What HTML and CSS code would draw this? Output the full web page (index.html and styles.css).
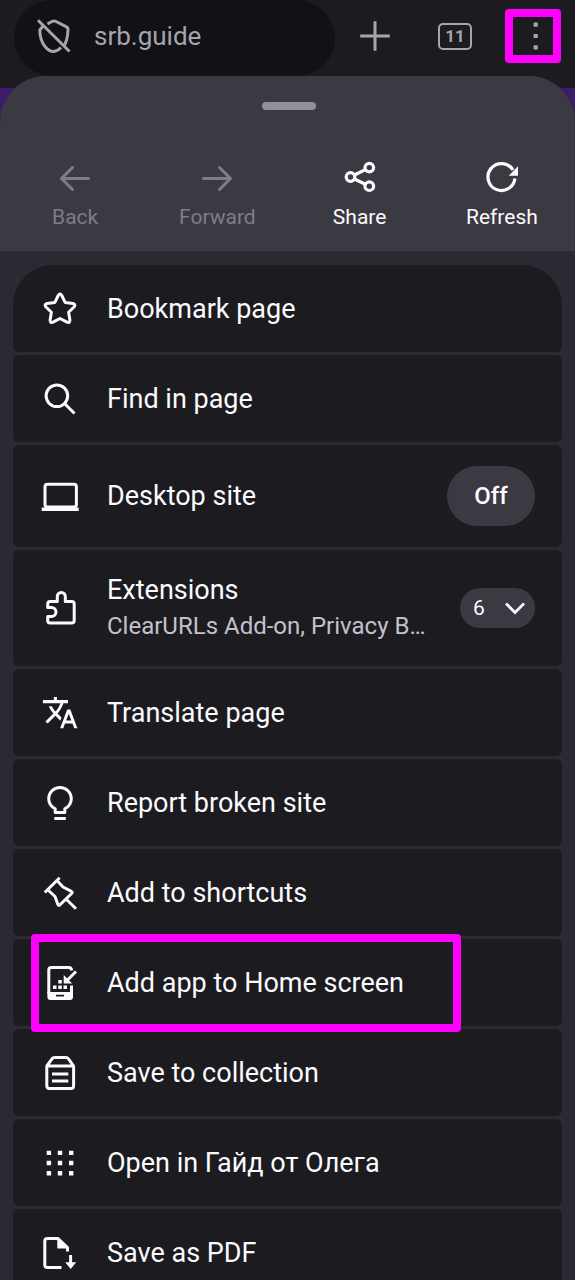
FILE: index.html
```html
<!DOCTYPE html>
<html lang="en">
<head>
<meta charset="utf-8">
<meta name="viewport" content="width=device-width, initial-scale=1">
<title>Browser menu</title>
<link rel="stylesheet" href="styles.css">
</head>
<body>
<div class="screen">
  <header class="toolbar">
    <button class="address" type="button">
      <svg class="icon" viewBox="0 0 40 40"><path d="M13.500 7.800 18 5.500Q20 4.500 22 5.500L32.500 10.800Q34.200 11.700 34 14Q33.500 25 29.500 31M5.800 13Q5.600 24 11 30.500Q15 35.500 19.500 35.500Q24 35 27 31.500M4 4.200 35.500 35.500M5.800 14 9.500 9.500"/></svg>
      <span>srb.guide</span>
    </button>
    <div class="actions">
      <button class="action" type="button" aria-label="New tab">
        <svg class="icon" viewBox="0 0 40 40"><path d="M20 5.200V34.800M5.200 20H34.800"/></svg>
      </button>
      <button class="action" type="button" aria-label="Open tabs"><span class="tab-count">11</span></button>
      <button class="action action-marked" type="button" aria-label="Menu">
        <svg class="icon solid" viewBox="0 0 40 40"><path d="M20.600 6.600h4.200v4.200h-4.200zM20.600 17.900h4.200v4.200h-4.200zM20.600 29.200h4.200v4.200h-4.200z"/></svg>
      </button>
    </div>
  </header>

  <main class="sheet">
    <div class="sheet-head">
      <div class="handle"></div>
      <nav class="page-nav">
        <button class="nav-button" type="button" disabled>
          <svg class="icon round" viewBox="0 0 40 40"><path d="M33.500 21.500H6.500M17.500 10.500 6.500 21.500 17.500 32.500"/></svg>
          <span>Back</span>
        </button>
        <button class="nav-button" type="button" disabled>
          <svg class="icon round" viewBox="0 0 40 40"><path d="M6.500 21.500H33.500M22.500 10.500 33.500 21.500 22.500 32.500"/></svg>
          <span>Forward</span>
        </button>
        <button class="nav-button" type="button">
          <svg class="icon heavy" viewBox="0 0 40 40"><circle cx="10.500" cy="20" r="4.300"/><circle cx="29.300" cy="10.600" r="4.300"/><circle cx="29.300" cy="29.200" r="4.300"/><path d="M14.500 18 25.300 12.600M14.500 22 25.300 27.200"/></svg>
          <span>Share</span>
        </button>
        <button class="nav-button" type="button">
          <svg class="icon heavy" viewBox="0 0 40 40"><path d="M31 13A13.500 13.500 0 1 0 32.900 21.500"/><path class="fill" d="M36 9.200V18.800H26.800z"/></svg>
          <span>Refresh</span>
        </button>
      </nav>
    </div>

    <div class="menu">
      <button class="item" type="button">
        <svg class="icon" viewBox="0 0 40 40"><path d="M18.200 6.500Q20 3.500 21.800 6.500L25.100 13.400 33 14.500Q36.200 15.400 34 18L28.600 23.300 29.900 31Q29.900 34.500 27 33.200L20 29.500 13 33.200Q10.100 34.500 10.100 31L11.400 23.300 6 18Q3.800 15.400 7 14.500L14.900 13.400Z"/></svg>
        <span class="label">Bookmark page</span>
      </button>
      <button class="item" type="button">
        <svg class="icon" viewBox="0 0 40 40"><circle cx="16.900" cy="16.800" r="10.800"/><path d="M24.500 24.500 34.500 34.500"/></svg>
        <span class="label">Find in page</span>
      </button>
      <button class="item item-desktop" type="button">
        <svg class="icon" viewBox="0 0 40 40"><rect x="5" y="8.200" width="31.400" height="22.800" rx="2.500"/><path class="fill" d="M1.700 31.500H38.700V35H1.700z"/></svg>
        <span class="label">Desktop site</span>
        <span class="switch">Off</span>
      </button>
      <button class="item item-extensions" type="button">
        <svg class="icon" viewBox="0 0 40 40"><path d="M17.300 13.500V8.500A4 4 0 0 1 25.300 8.500V13.500H31.800Q34.200 13.500 34.200 15.900V32.600Q34.200 35 31.800 35H10.100Q7.700 35 7.700 32.600V28.500H11.500A4.500 4.500 0 0 0 11.500 19.500H7.700V15.900Q7.700 13.500 10.100 13.500Z"/></svg>
        <span class="label">Extensions<span class="detail">ClearURLs Add-on, Privacy B…</span></span>
        <span class="count">6<svg class="chevron" viewBox="0 0 20 20"><path d="M1 5.500 10 14.500 19 5.500"/></svg></span>
      </button>
      <button class="item" type="button">
        <svg class="icon solid" viewBox="0 0 24 24"><path d="M12.870 15.070l-2.540-2.510.030-.030c1.740-1.940 2.980-4.170 3.710-6.530H17V4h-7V2H8v2H1v1.990h11.170C11.500 7.920 10.440 9.750 9 11.350 8.070 10.320 7.300 9.190 6.690 8h-2c.73 1.630 1.730 3.170 2.980 4.560l-5.090 5.020L4 19l5-5 3.110 3.110.76-2.040zM18.500 10h-2L12 22h2l1.120-3h4.750L21 22h2l-4.500-12zm-2.620 7l1.620-4.330L19.120 17h-3.240z" transform="translate(.8 .5) scale(.94)"/></svg>
        <span class="label">Translate page</span>
      </button>
      <button class="item" type="button">
        <svg class="icon" viewBox="0 0 40 40"><path d="M15.200 29.500V25.800C11 23.500 8.700 20 8.700 15.700A11.300 11.300 0 0 1 31.300 15.700C31.300 20 29 23.500 24.800 25.800V29.500ZM14.300 35.400H25.800"/></svg>
        <span class="label">Report broken site</span>
      </button>
      <button class="item" type="button">
        <svg class="icon" viewBox="0 0 40 40"><path d="M4.800 19.500 19.600 4.800M17 7.500 23 14 31.400 18.400Q32.800 19.300 31.600 20.500L19.800 32Q18.500 33 17.900 31.500L15 23.500 8 17M25.500 25.500 36 35.800"/></svg>
        <span class="label">Add to shortcuts</span>
      </button>
      <button class="item item-marked" type="button">
        <svg class="icon" viewBox="0 0 40 40"><path d="M8.800 31V7Q8.800 4.500 11.300 4.500H29Q31.300 4.500 31.700 7.500M31.500 22.500V31"/><path class="fill" fill-rule="evenodd" d="M7.400 29H33V34Q33 37 30 37H10.400Q7.400 37 7.400 34ZM16 31.700V33.600H24V31.700ZM13 22.500h3.500v3.500h-3.500zM18.300 22.500h3.500v3.500h-3.500zM23.500 22.500h3.500v3.500h-3.500zM18.300 17h3.500v3.500h-3.500zM23.700 12V20.500H32.200z"/><path d="M36 8.500 27 17.500"/></svg>
        <span class="label">Add app to Home screen</span>
      </button>
      <button class="item" type="button">
        <svg class="icon" viewBox="0 0 40 40"><path d="M6.800 13V32.800Q6.800 35.500 9.500 35.500H31Q33.600 35.500 33.600 32.800V13ZM6.800 13 12 5.800Q13 4.500 14.500 4.500H26Q27.500 4.500 28.500 5.800L33.600 13M12 21H28.300M12 28H28.300"/></svg>
        <span class="label">Save to collection</span>
      </button>
      <button class="item" type="button">
        <svg class="icon solid" viewBox="0 0 40 40"><path d="M6.700 7.700h4.400v4.400h-4.400zM17.800 7.700h4.400v4.400h-4.400zM29 7.700h4.400v4.400h-4.400zM6.700 17.800h4.400v4.400h-4.400zM17.800 17.800h4.400v4.400h-4.400zM29 17.800h4.400v4.400h-4.400zM6.700 28h4.400v4.400h-4.400zM17.800 28h4.400v4.400h-4.400zM29 28h4.400v4.400h-4.400z"/></svg>
        <span class="label">Open in Гайд от Олега</span>
      </button>
      <button class="item" type="button">
        <svg class="icon" viewBox="0 0 40 40"><path d="M21.500 34.600H7.500Q4.800 34.600 4.800 32V8Q4.800 5.400 7.500 5.400H17.800L27.500 14.500V18.500M30.600 22V30"/><path class="fill" d="M17.300 5.500V15.500H28.700V14zM25.200 29.200H36.200L30.700 36z"/></svg>
        <span class="label">Save as PDF</span>
      </button>
    </div>
  </main>
</div>
</body>
</html>
```
FILE: styles.css
```css
* { box-sizing: border-box; }

body {
  margin: 0;
  background: #3d1c6b;
  color: #fbfbfe;
  font-family: Roboto, "Noto Sans", sans-serif;
}

button {
  margin: 0;
  padding: 0;
  border: 0;
  background: none;
  color: inherit;
  font: inherit;
  text-align: left;
}

.screen {
  display: flex;
  flex-direction: column;
  height: 100vh;
  overflow: hidden;
}

.icon {
  flex: none;
  width: 40px;
  height: 40px;
  fill: none;
  stroke: currentColor;
  stroke-width: 3;
  stroke-linejoin: round;
}

.icon.round { stroke-linecap: round; }

.icon.heavy { stroke-width: 3.2; }

.icon.solid, .icon .fill {
  fill: currentColor;
  stroke: none;
}

.toolbar {
  display: flex;
  flex: none;
  gap: 20px;
  height: 88px;
  padding: 0 14px;
  background: #1c1b20;
  color: #a6a4ad;
}

.address {
  display: flex;
  flex: 1;
  align-items: center;
  gap: 20px;
  height: 76px;
  padding: 0 20px 4px;
  border-radius: 38px;
  background: #121116;
  font-size: 26px;
}

.actions {
  display: flex;
  align-items: center;
  height: 72px;
}

.action {
  display: flex;
  align-items: center;
  justify-content: center;
  width: 40px;
  height: 54px;
  margin-right: 40px;
}

.action:nth-child(2) { margin-right: 30px; }

.action-marked {
  width: 56px;
  margin-right: 0;
  border: 8px solid #ff00ff;
  border-radius: 4px;
}

.tab-count {
  width: 34px;
  border: 2px solid currentColor;
  border-radius: 5px;
  font-size: 17px;
  font-weight: 700;
  line-height: 23px;
  text-align: center;
}

.sheet {
  display: flex;
  flex: 1;
  flex-direction: column;
  min-height: 0;
  margin-top: -12px;
  border-radius: 46px 46px 0 0;
  background: #2b2a32;
  overflow: hidden;
}

.sheet-head {
  flex: none;
  height: 175px;
  padding: 26px 2px 0 4px;
  background: #3b3942;
}

.handle {
  width: 54px;
  height: 8px;
  margin: 0 auto 47px;
  border-radius: 4px;
  background: #918f9b;
}

.page-nav {
  display: grid;
  grid-template-columns: repeat(4, 1fr);
}

.nav-button {
  display: flex;
  flex-direction: column;
  align-items: center;
  gap: 6px;
  font-size: 21px;
  line-height: 28px;
}

.nav-button:disabled { color: #7e7c87; }

.menu {
  display: flex;
  flex-direction: column;
  gap: 3px;
  padding: 14px 13px 0;
}

.item {
  position: relative;
  display: flex;
  flex: none;
  align-items: center;
  gap: 27px;
  height: 87px;
  padding: 0 27px;
  border-radius: 6px;
  background: #1c1b20;
  font-size: 27px;
  line-height: 36px;
}

.item:first-child { border-radius: 40px 40px 6px 6px; }

.item-desktop { height: 102px; }

.item-extensions { height: 116px; }

.label {
  flex: 1;
  white-space: nowrap;
}

.detail {
  display: block;
  color: #c3c2ca;
  font-size: 24px;
}

.switch {
  width: 88px;
  border-radius: 30px;
  background: #3b3942;
  font-size: 24px;
  font-weight: 500;
  line-height: 60px;
  text-align: center;
}

.count {
  display: flex;
  align-items: center;
  justify-content: space-between;
  width: 75px;
  padding: 0 10px 0 13px;
  border-radius: 20px;
  background: #3b3942;
  font-size: 21px;
  line-height: 40px;
}

.chevron {
  width: 20px;
  height: 20px;
  fill: none;
  stroke: currentColor;
  stroke-width: 2.7;
}

.item-marked { z-index: 1; }

.item-marked::after {
  content: "";
  position: absolute;
  inset: -5px 101px -6px 18px;
  border: 8px solid #ff00ff;
  border-radius: 4px;
}
```
